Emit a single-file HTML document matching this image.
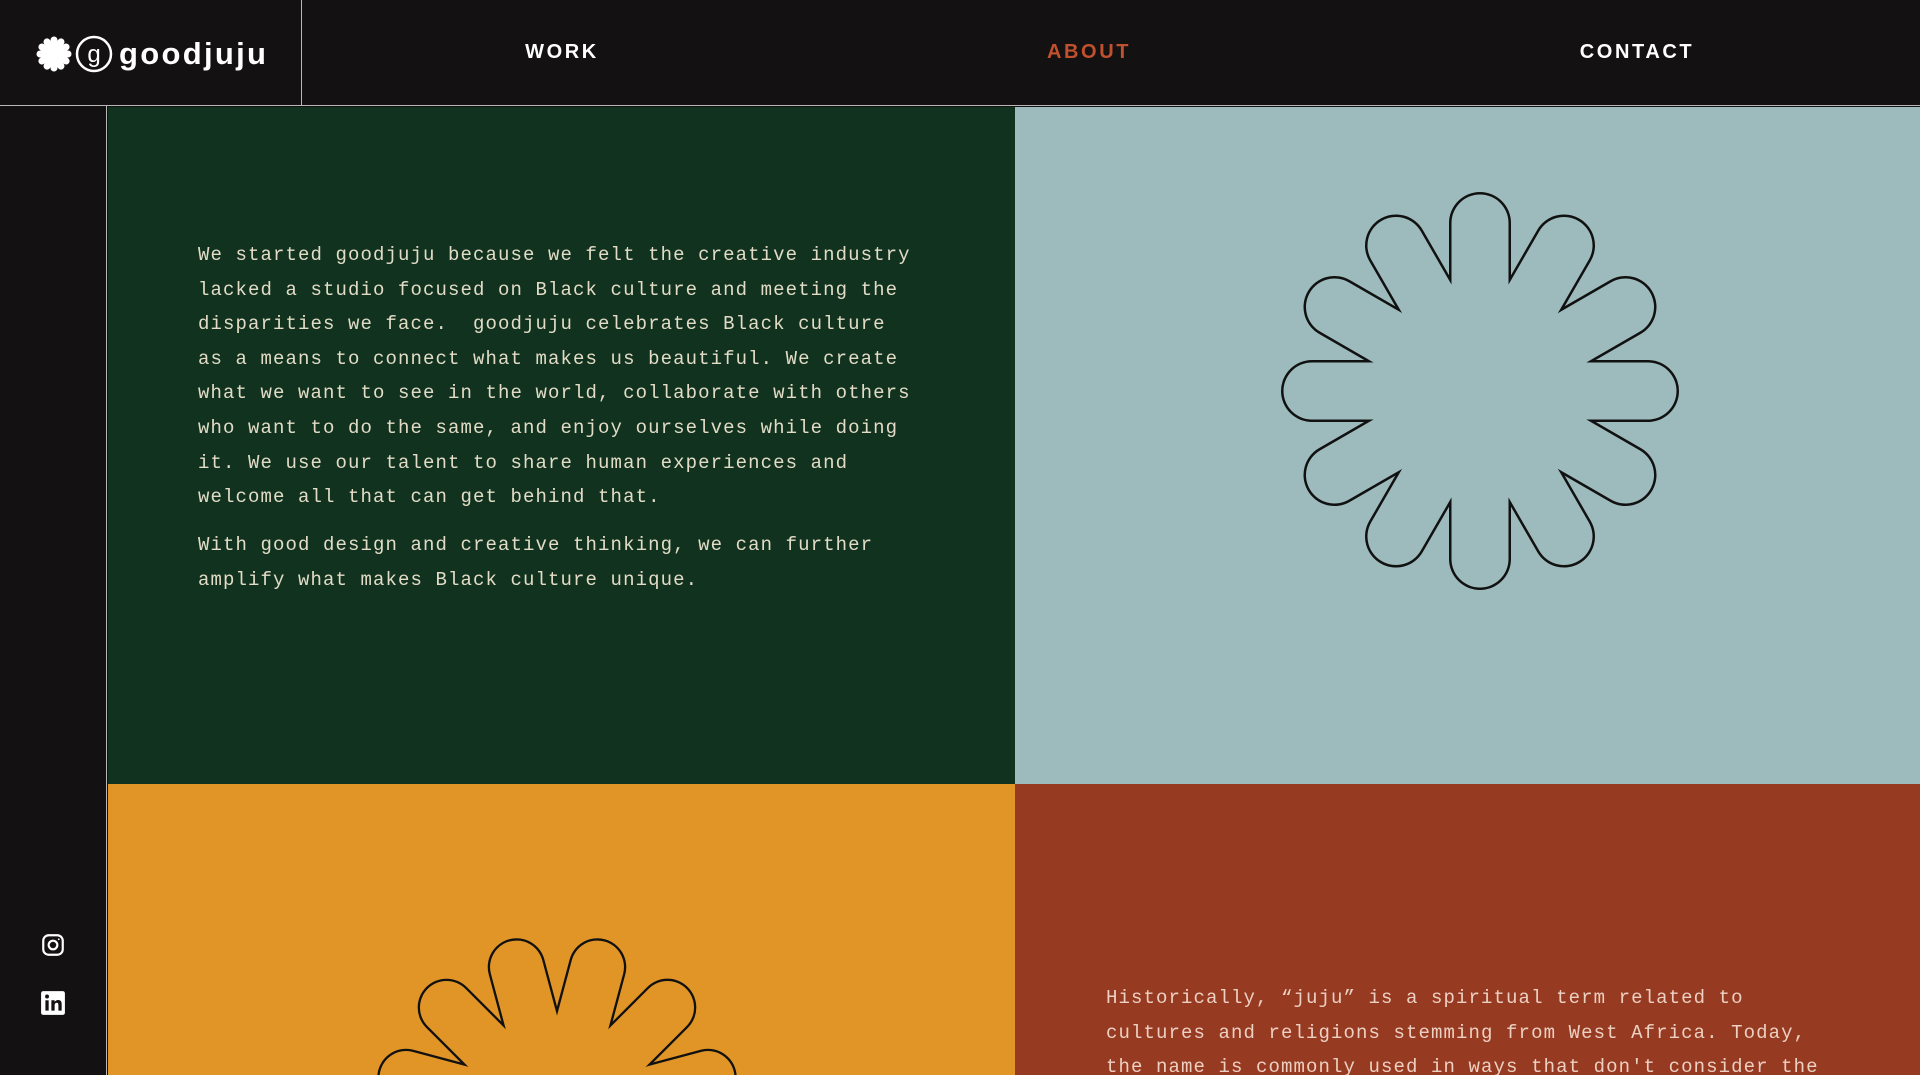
<!DOCTYPE html>
<html><head><meta charset="utf-8"><style>
*{margin:0;padding:0;box-sizing:border-box}
html,body{width:1920px;height:1075px;overflow:hidden}
body{background:#131111;position:relative;font-family:"Liberation Sans",sans-serif}
.hdr{position:absolute;left:0;top:0;width:1920px;height:106px;background:#131111;border-bottom:1px solid #b9b9b9}
.logo{position:absolute;left:0;top:0;width:302px;height:105px;border-right:1px solid #b9b9b9}
.nav{position:absolute;top:41px;font-weight:bold;font-size:20px;letter-spacing:2.6px;color:#fff;transform:translateX(-50%)}
.side{position:absolute;left:0;top:106px;width:107px;height:969px;border-right:1px solid #b9b9b9}
.p{position:absolute}
.txt{font-family:"Liberation Mono",monospace;font-size:19px;letter-spacing:1.1px;line-height:34.6px;white-space:pre}
</style></head><body>
<div class="hdr">
 <div class="logo">
  <svg width="302" height="105" style="position:absolute;left:0;top:0">
   <g transform="translate(54,54)" fill="#fff">
    <circle r="9"/>
    <g stroke="#fff" stroke-width="7" stroke-linecap="round">
     <line x1="0" y1="0" x2="0" y2="-14"/><line x1="0" y1="0" x2="7" y2="-12.1"/><line x1="0" y1="0" x2="12.1" y2="-7"/><line x1="0" y1="0" x2="14" y2="0"/><line x1="0" y1="0" x2="12.1" y2="7"/><line x1="0" y1="0" x2="7" y2="12.1"/><line x1="0" y1="0" x2="0" y2="14"/><line x1="0" y1="0" x2="-7" y2="12.1"/><line x1="0" y1="0" x2="-12.1" y2="7"/><line x1="0" y1="0" x2="-14" y2="0"/><line x1="0" y1="0" x2="-12.1" y2="-7"/><line x1="0" y1="0" x2="-7" y2="-12.1"/>
    </g>
   </g>
   <circle cx="94" cy="54" r="17" fill="none" stroke="#fff" stroke-width="2.5"/>
   <text x="94" y="62" text-anchor="middle" fill="#fff" font-family="Liberation Sans" font-size="24">g</text>
   <text x="119" y="64" fill="#fff" font-family="Liberation Sans" font-weight="bold" font-size="31" letter-spacing="2.3">goodjuju</text>
  </svg>
 </div>
 <div class="nav" style="left:562px">WORK</div>
 <div class="nav" style="left:1089px;color:#c0502e">ABOUT</div>
 <div class="nav" style="left:1637px">CONTACT</div>
</div>
<div class="side">
 <svg width="26" height="26" viewBox="0 0 24 24" style="position:absolute;left:40px;top:826px" fill="none" stroke="#fff" stroke-width="2"><rect x="3" y="3" width="18" height="18" rx="5"/><circle cx="12" cy="12" r="4"/><circle cx="17.3" cy="6.7" r="0.8" fill="#fff" stroke="none"/></svg>
 <svg width="26" height="26" viewBox="0 0 24 24" style="position:absolute;left:40px;top:884px"><rect x="1" y="1" width="22" height="22" rx="2" fill="#fff"/><rect x="5" y="9.5" width="3" height="9.5" fill="#131111"/><circle cx="6.5" cy="6" r="1.8" fill="#131111"/><path d="M10.5 9.5h3v1.5c.6-1 1.8-1.8 3.3-1.8 2.6 0 3.2 1.700 3.2 4V19h-3v-5c0-1.2-.3-2.2-1.6-2.2s-1.9 1-1.9 2.2v5h-3z" fill="#131111"/></svg>
</div>
<div class="p" style="left:108px;top:107px;width:907px;height:677px;background:#10321f">
 <div class="txt" style="position:absolute;left:90px;top:131px;color:#e2dcc6">We started goodjuju because we felt the creative industry
lacked a studio focused on Black culture and meeting the
disparities we face.  goodjuju celebrates Black culture
as a means to connect what makes us beautiful. We create
what we want to see in the world, collaborate with others
who want to do the same, and enjoy ourselves while doing
it. We use our talent to share human experiences and
welcome all that can get behind that.</div>
 <div class="txt" style="position:absolute;left:90px;top:421px;color:#e2dcc6">With good design and creative thinking, we can further
amplify what makes Black culture unique.</div>
</div>
<div class="p" style="left:1015px;top:107px;width:905px;height:677px;background:#9dbbbc;overflow:hidden">
 <svg width="905" height="677">
  <g transform="translate(465,284)" stroke-linecap="round">
   <g stroke="#111" stroke-width="62">
    <line x2="0" y2="-168"/><line x2="84" y2="-145.5"/><line x2="145.5" y2="-84"/><line x2="168" y2="0"/><line x2="145.5" y2="84"/><line x2="84" y2="145.5"/><line x2="0" y2="168"/><line x2="-84" y2="145.5"/><line x2="-145.5" y2="84"/><line x2="-168" y2="0"/><line x2="-145.5" y2="-84"/><line x2="-84" y2="-145.5"/>
   </g>
   <g stroke="#9dbbbc" stroke-width="57">
    <line x2="0" y2="-168"/><line x2="84" y2="-145.5"/><line x2="145.5" y2="-84"/><line x2="168" y2="0"/><line x2="145.5" y2="84"/><line x2="84" y2="145.5"/><line x2="0" y2="168"/><line x2="-84" y2="145.5"/><line x2="-145.5" y2="84"/><line x2="-168" y2="0"/><line x2="-145.5" y2="-84"/><line x2="-84" y2="-145.5"/>
   </g>
  </g>
 </svg>
</div>
<div class="p" style="left:108px;top:784px;width:907px;height:291px;background:#e09526;overflow:hidden">
 <svg width="907" height="291">
  <g transform="translate(449,334) rotate(15) scale(0.93)" stroke-linecap="round">
   <g stroke="#111" stroke-width="62">
    <line x2="0" y2="-168"/><line x2="84" y2="-145.5"/><line x2="145.5" y2="-84"/><line x2="168" y2="0"/><line x2="145.5" y2="84"/><line x2="-145.5" y2="84"/><line x2="-168" y2="0"/><line x2="-145.5" y2="-84"/><line x2="-84" y2="-145.5"/>
   </g>
   <g stroke="#e09526" stroke-width="57">
    <line x2="0" y2="-168"/><line x2="84" y2="-145.5"/><line x2="145.5" y2="-84"/><line x2="168" y2="0"/><line x2="145.5" y2="84"/><line x2="-145.5" y2="84"/><line x2="-168" y2="0"/><line x2="-145.5" y2="-84"/><line x2="-84" y2="-145.5"/>
   </g>
  </g>
 </svg>
</div>
<div class="p" style="left:1015px;top:784px;width:905px;height:291px;background:#973a22;overflow:hidden">
 <div class="txt" style="position:absolute;left:91px;top:197px;color:#ecd0c2">Historically, “juju” is a spiritual term related to
cultures and religions stemming from West Africa. Today,
the name is commonly used in ways that don't consider the</div>
</div>
</body></html>
